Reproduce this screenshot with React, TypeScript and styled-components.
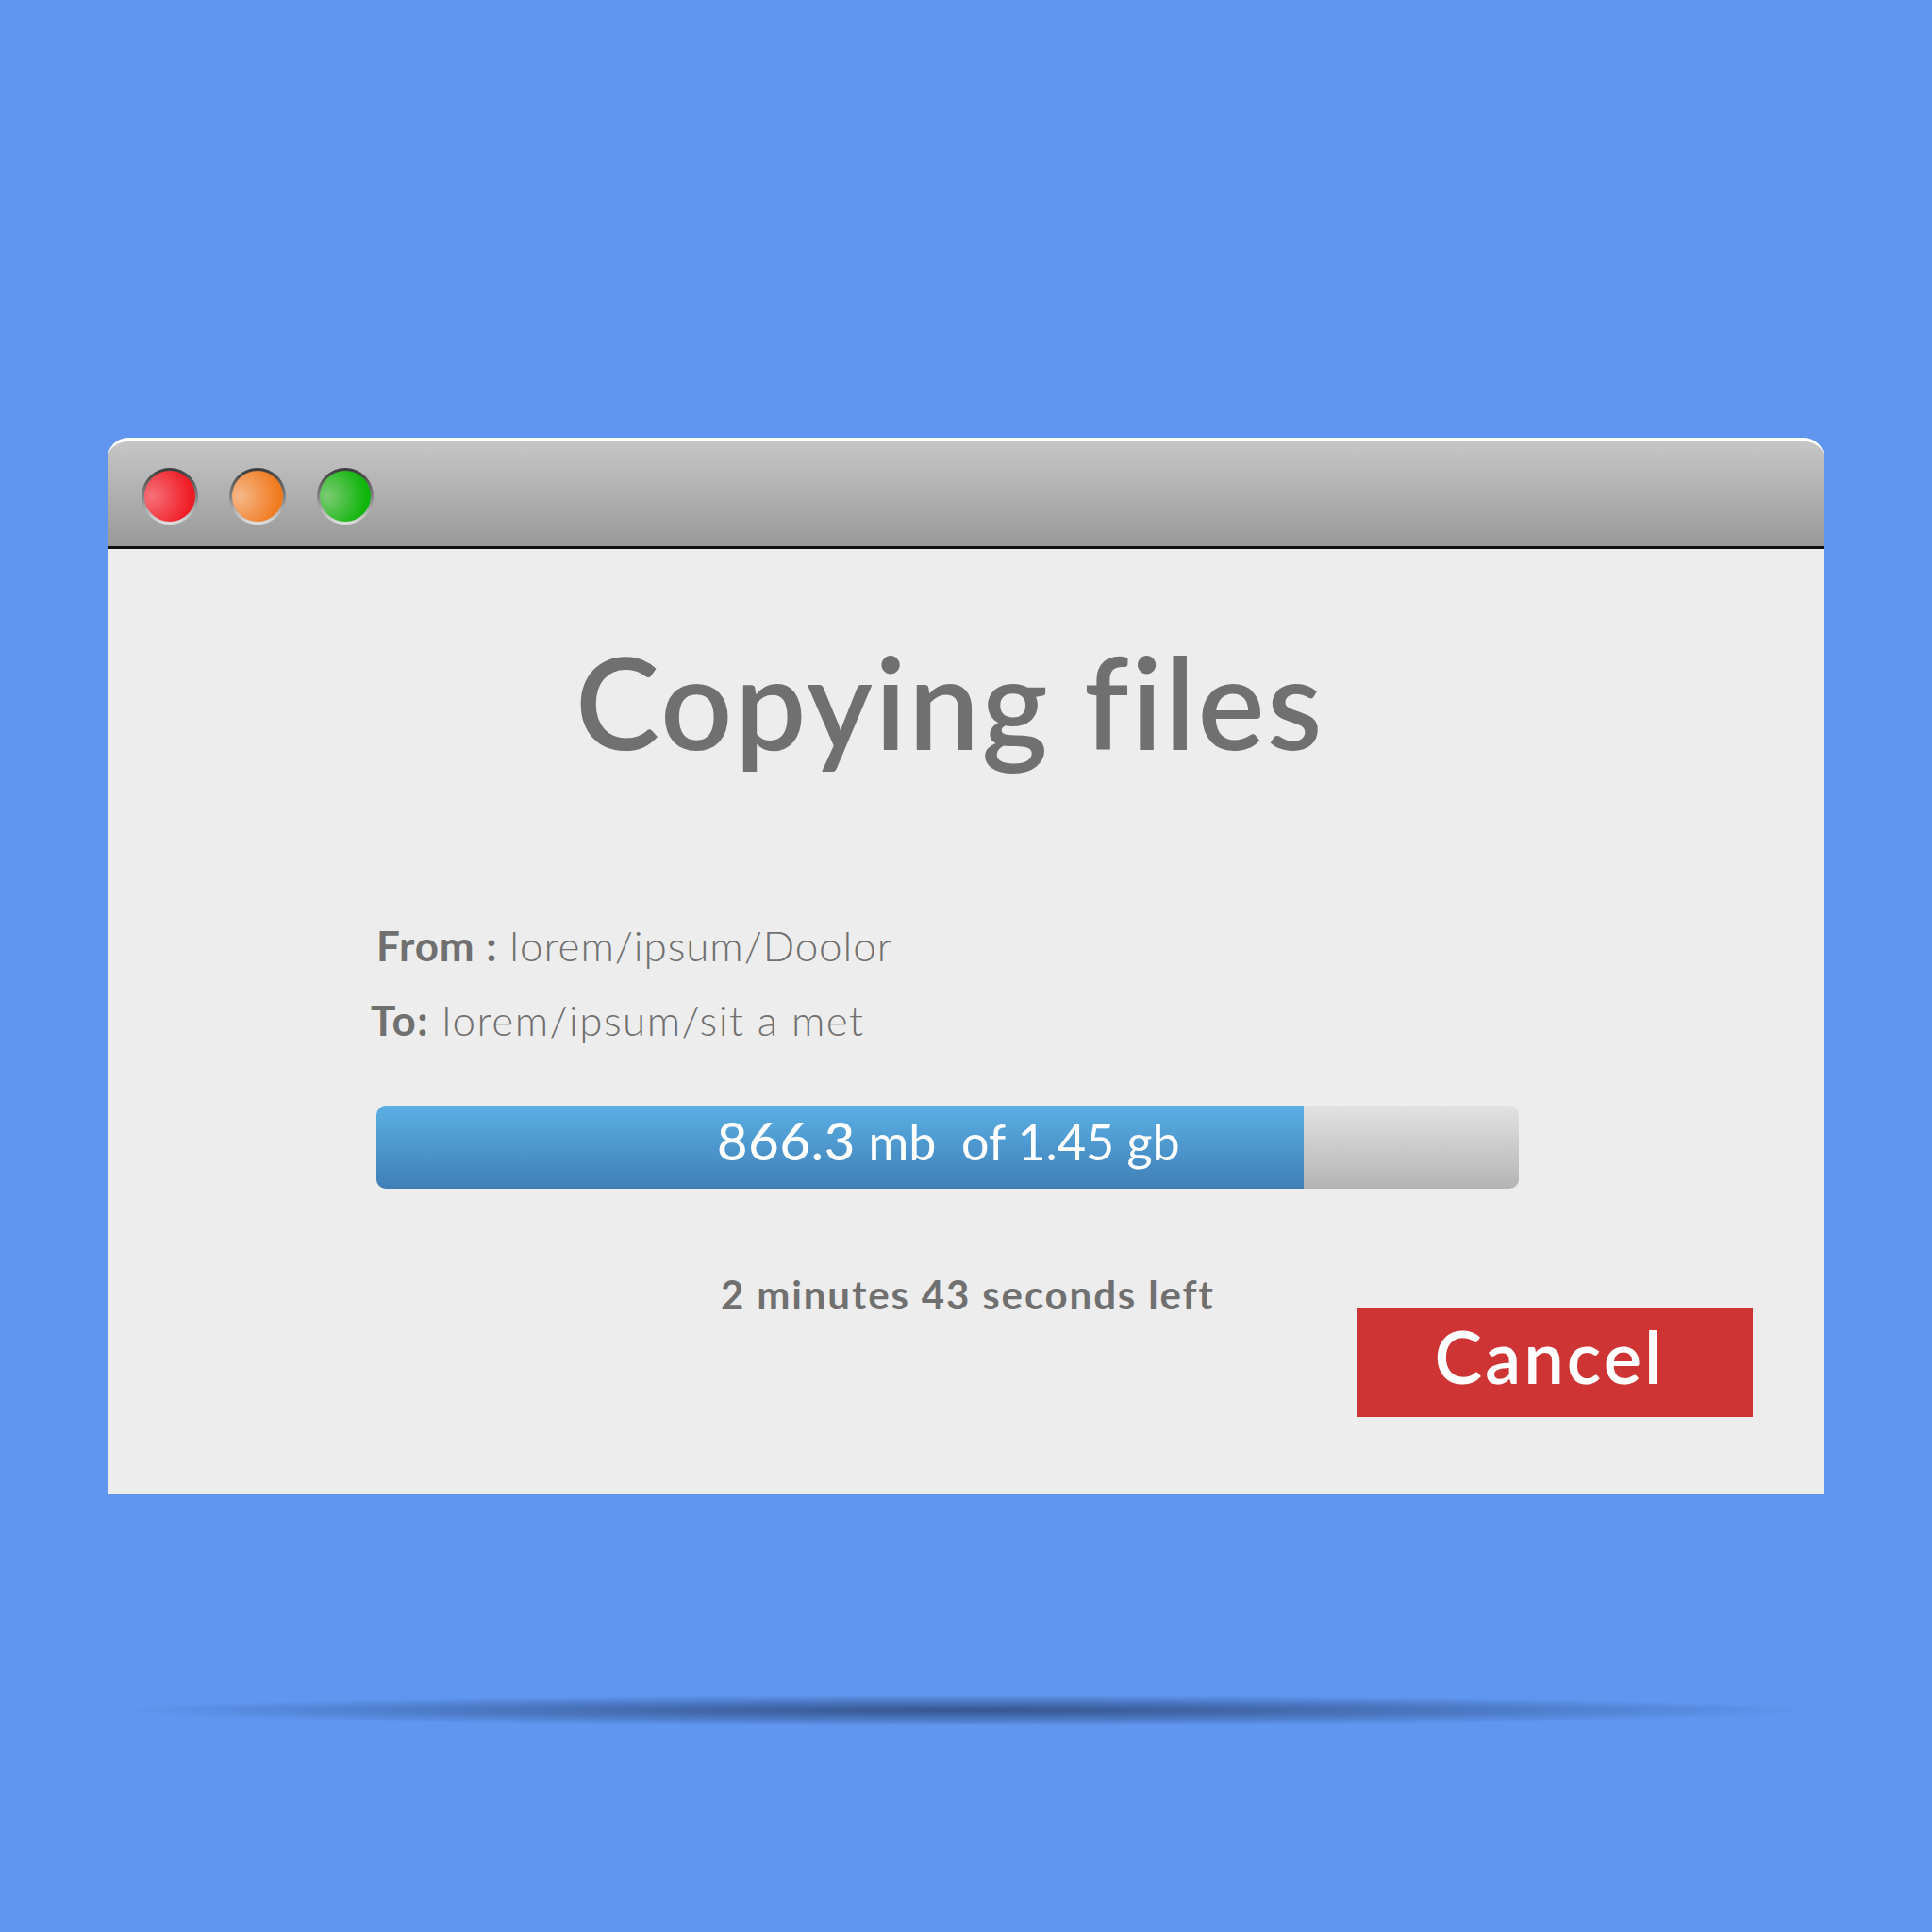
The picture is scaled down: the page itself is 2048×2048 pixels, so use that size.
import React from "react";
import styled, { createGlobalStyle } from "styled-components";

const Global = createGlobalStyle`
  html, body { margin: 0; padding: 0; background: #6096f0; }
`;

const Page = styled.div`
  width: 2048px;
  height: 2048px;
  padding: 464px 114px 0 114px;
  box-sizing: border-box;
  display: flex;
  flex-direction: column;
  background: #6096f0;
  font-family: Lato, "Liberation Sans", sans-serif;
  color: #707070;
`;

const Window = styled.div`
  height: 1120px;
  display: flex;
  flex-direction: column;
  background: #ededed;
  border-radius: 22px 22px 0 0;
  overflow: hidden;
`;

const TitleBar = styled.div`
  height: 118px;
  box-sizing: border-box;
  flex: none;
  display: flex;
  align-items: center;
  gap: 33px;
  padding: 5px 0 0 36px;
  border-top: 4px solid #ffffff;
  border-bottom: 3px solid #111111;
  border-radius: 22px 22px 0 0;
  background: linear-gradient(#c6c6c6, #999999);
`;

const Light = styled.div<{ $hi: string; $base: string }>`
  width: 60px;
  height: 60px;
  box-sizing: border-box;
  padding: 3px;
  border-radius: 50%;
  background: linear-gradient(#3a3a3a, #8a8a8a 55%, #e2e2e2);
  &::after {
    content: "";
    display: block;
    width: 54px;
    height: 54px;
    border-radius: 50%;
    background: radial-gradient(circle at 15% 50%, ${(p) => p.$hi}, ${(p) => p.$base} 78%);
  }
`;

const Content = styled.div`
  flex: 1;
  display: flex;
  flex-direction: column;
  padding: 0 76px 0 285px;
`;

const Title = styled.h1`
  margin: 82px 0 0 211px;
  font-size: 134px;
  line-height: 160px;
  font-weight: 600;
  letter-spacing: 2.4px;
  white-space: nowrap;
`;

const PathRow = styled.div<{ $indent: number; $spacing: number; $first?: boolean }>`
  margin: ${(p) => (p.$first ? "153px" : "29px")} 0 0 ${(p) => p.$indent}px;
  font-size: 44px;
  line-height: 50px;
  font-weight: 300;
  letter-spacing: ${(p) => p.$spacing}px;
  white-space: nowrap;
`;

const PathLabel = styled.b`
  font-weight: 700;
`;

const Track = styled.div`
  width: 1211px;
  height: 88px;
  margin-top: 66px;
  border-radius: 10px;
  overflow: hidden;
  background: linear-gradient(#e2e2e2, #b4b4b4);
`;

const Fill = styled.div`
  height: 100%;
  box-sizing: border-box;
  padding: 5px 0 0 361px;
  background: linear-gradient(#5aafe4, #3f7fb7);
  color: #ffffff;
  font-size: 52px;
  line-height: 64px;
  font-weight: 400;
  white-space: pre;
`;

const Amount = styled.span`
  font-size: 56px;
  font-weight: 500;
  letter-spacing: 0.8px;
`;

const Footer = styled.div`
  display: flex;
  align-items: flex-start;
  justify-content: space-between;
  margin-top: 87px;
`;

const TimeLeft = styled.div`
  margin: 0 0 0 365px;
  font-size: 42px;
  line-height: 50px;
  font-weight: 700;
  letter-spacing: 1.85px;
  white-space: nowrap;
`;

const CancelButton = styled.button`
  width: 419px;
  height: 115px;
  margin-top: 40px;
  padding: 0 12px 14px 0;
  border: 0;
  border-radius: 0;
  background: #cf3434;
  color: #ffffff;
  font-family: inherit;
  font-size: 76px;
  font-weight: 600;
  letter-spacing: 3px;
`;

const FloorShadow = styled.div`
  width: 1800px;
  height: 32px;
  margin: 213px 0 0 10px;
  border-radius: 50%;
  background: radial-gradient(ellipse closest-side, #36578f 0%, #4166a8 30%, #5080cf 70%, #6096f0 100%);
`;

export default function App() {
  return (
    <Page>
      <Global />
      <Window>
        <TitleBar>
          <Light $hi="#f7707a" $base="#f01c24" />
          <Light $hi="#f6b88a" $base="#f07a1e" />
          <Light $hi="#7ccb72" $base="#0eb50a" />
        </TitleBar>
        <Content>
          <Title>Copying files</Title>
          <PathRow $first $indent={0} $spacing={0.9}>
            <PathLabel>From :</PathLabel> lorem/ipsum/Doolor
          </PathRow>
          <PathRow $indent={-6} $spacing={1.43}>
            <PathLabel>To:</PathLabel> lorem/ipsum/sit a met
          </PathRow>
          <Track>
            <Fill style={{ width: `${(983 / 1211) * 100}%` }}>
              <Amount>866.3</Amount> mb  of 1.45 gb
            </Fill>
          </Track>
          <Footer>
            <TimeLeft>2 minutes 43 seconds left</TimeLeft>
            <CancelButton>Cancel</CancelButton>
          </Footer>
        </Content>
      </Window>
      <FloorShadow />
    </Page>
  );
}
